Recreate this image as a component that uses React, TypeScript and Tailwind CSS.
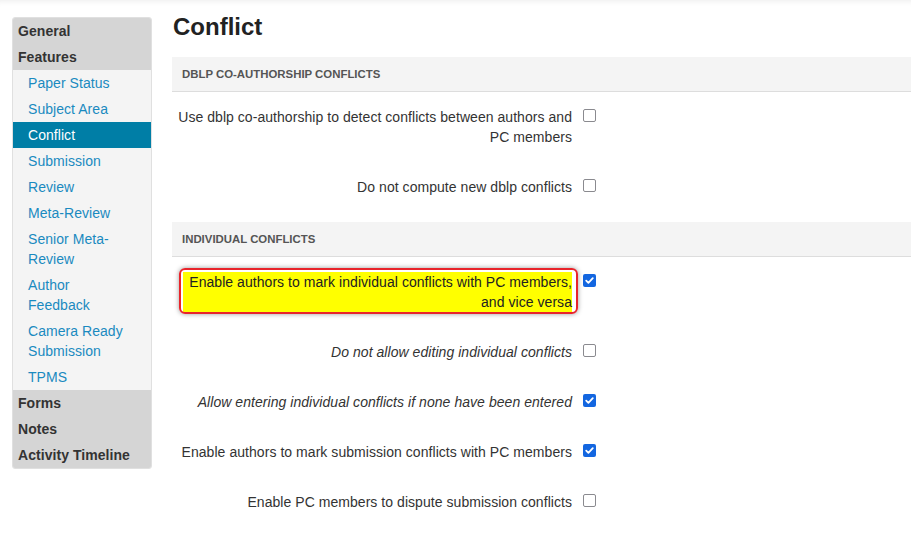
import React from "react";

function Box({ checked }: { checked: boolean }) {
  if (checked) {
    return (
      <span className="mt-[2px] ml-[11px] flex h-[13px] w-[13px] shrink-0 items-center justify-center rounded-[2px] bg-[#1366e0]">
        <svg width="11" height="11" viewBox="0 0 11 11">
          <path d="M2.2 5.6 L4.4 7.8 L8.8 3.2" fill="none" stroke="#fff" strokeWidth="1.8" strokeLinecap="round" strokeLinejoin="round" />
        </svg>
      </span>
    );
  }
  return <span className="mt-[2px] ml-[11px] block h-[13px] w-[13px] shrink-0 rounded-[2px] border-[1.5px] border-[#8a8a8f] bg-white" />;
}

function Row({ children, checked, italic }: { children: React.ReactNode; checked: boolean; italic?: boolean }) {
  return (
    <div className="flex py-[15px]">
      <div className={"w-[400px] shrink-0 text-right " + (italic ? "italic" : "")}>{children}</div>
      <Box checked={checked} />
    </div>
  );
}

function Header({ children }: { children: React.ReactNode }) {
  return (
    <div className="flex h-[35px] items-center border-b border-[#dddddd] bg-[#f4f4f4] pl-[10px] text-[11.4px] font-bold tracking-normal uppercase text-[#555]">
      {children}
    </div>
  );
}

const groups = [
  { type: "h", label: "General" },
  { type: "h", label: "Features" },
  { type: "l", label: "Paper Status" },
  { type: "l", label: "Subject Area" },
  { type: "a", label: "Conflict" },
  { type: "l", label: "Submission" },
  { type: "l", label: "Review" },
  { type: "l", label: "Meta-Review" },
  { type: "l", label: "Senior Meta-Review" },
  { type: "l", label: "Author Feedback" },
  { type: "l", label: "Camera Ready Submission" },
  { type: "l", label: "TPMS" },
  { type: "h", label: "Forms" },
  { type: "h", label: "Notes" },
  { type: "h", label: "Activity Timeline" },
];

export default function App() {
  return (
    <div
      className="flex min-h-[535px] items-start bg-white text-[14px] leading-[20px] tracking-[0.05px] text-[#333] shadow-[inset_0_7px_6px_-6px_rgba(0,0,0,0.08)]"
      style={{ fontFamily: '"Liberation Sans", Arial, sans-serif' }}
    >
      <nav className="mt-[17px] ml-[12px] w-[140px] shrink-0 overflow-hidden rounded-[3px] border border-[#e0e0e0] bg-[#f4f4f4]">
        {groups.map((g) =>
          g.type === "h" ? (
            <div key={g.label} className="bg-[#d5d5d5] py-[3px] pl-[5px] font-bold text-[#333]">
              {g.label}
            </div>
          ) : g.type === "a" ? (
            <div key={g.label} className="bg-[#007ea6] py-[3px] pl-[15px] pr-[8px] text-white">
              {g.label}
            </div>
          ) : (
            <div key={g.label} className="py-[3px] pl-[15px] pr-[20px] text-[#1a8ac0]">
              {g.label}
            </div>
          )
        )}
      </nav>
      <main className="ml-[20px] flex-1 pt-[12px]">
        <h1 className="mb-[15px] pl-[1px] text-[24px] leading-[30px] font-bold tracking-normal text-[#222]">Conflict</h1>
        <Header>DBLP Co-Authorship Conflicts</Header>
        <Row checked={false}>Use dblp co-authorship to detect conflicts between authors and PC members</Row>
        <Row checked={false}>Do not compute new dblp conflicts</Row>
        <div className="mt-[10px]">
          <Header>Individual Conflicts</Header>
        </div>
        <div className="flex py-[15px]">
          <div className="w-[400px] shrink-0 pl-[11px]">
            <div className="relative">
              <div className="bg-[#ffff00] text-right text-[#222]">
                Enable authors to mark individual conflicts with PC members, and vice versa
              </div>
              <div className="absolute -top-[4px] -bottom-[2px] -left-[4px] -right-[6px] rounded-[6px] border-2 border-[#e8242b] shadow-[0_0_5px_rgba(0,0,0,0.4)]" />
            </div>
          </div>
          <Box checked={true} />
        </div>
        <Row checked={false} italic>Do not allow editing individual conflicts</Row>
        <Row checked={true} italic>Allow entering individual conflicts if none have been entered</Row>
        <Row checked={true}>Enable authors to mark submission conflicts with PC members</Row>
        <Row checked={false}>Enable PC members to dispute submission conflicts</Row>
      </main>
    </div>
  );
}
